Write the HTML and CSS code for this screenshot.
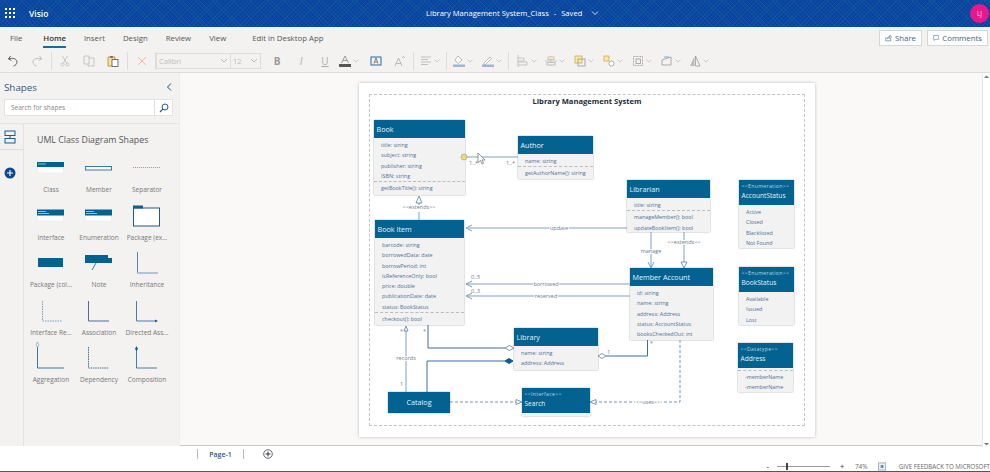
FILE: index.html
```html
<!DOCTYPE html>
<html lang="en">
<head>
<meta charset="utf-8">
<title>Visio</title>
<link rel="stylesheet" href="styles.css">
</head>
<body>
<div class="app">
  <header class="topbar">
    <svg class="waffle" width="12" height="12" viewBox="0 0 12 12"><g fill="#fff"><rect x="1" y="1" width="2" height="2"/><rect x="5" y="1" width="2" height="2"/><rect x="9" y="1" width="2" height="2"/><rect x="1" y="5" width="2" height="2"/><rect x="5" y="5" width="2" height="2"/><rect x="9" y="5" width="2" height="2"/><rect x="1" y="9" width="2" height="2"/><rect x="5" y="9" width="2" height="2"/><rect x="9" y="9" width="2" height="2"/></g></svg>
    <span class="brand">Visio</span>
    <div class="doc-title"><span>Library Management System_Class</span><span class="dash">-</span><span>Saved</span>
      <svg class="title-chev" width="8" height="6" viewBox="0 0 8 6"><path d="M1 1.500 4 4.500 7 1.500" fill="none" stroke="#fff" stroke-width=".8"/></svg>
    </div>
    <div class="avatar">LJ</div>
  </header>

  <nav class="tabs">
    <span class="tab tab-file">File</span>
    <span class="tab tab-active">Home</span>
    <span class="tab">Insert</span>
    <span class="tab">Design</span>
    <span class="tab">Review</span>
    <span class="tab tab-view">View</span>
    <span class="tab">Edit in Desktop App</span>
    <div class="tab-actions">
      <button class="action action-share">
        <svg width="10" height="10" viewBox="0 0 10 10"><path d="M1 4v5h7V6M3 6c.5-2 2-3 4-3V1l2.500 2.500L7 6V4.500C5.500 4.500 4 5 3 6Z" fill="none" stroke="#3d5f85" stroke-width=".8"/></svg>
        Share</button>
      <button class="action action-comments">
        <svg width="10" height="10" viewBox="0 0 10 10"><path d="M1 1h8v6H4L2 9V7H1Z" fill="none" stroke="#3d5f85" stroke-width=".8"/></svg>
        Comments</button>
    </div>
  </nav>

  <div class="toolbar">
    <span class="tool"><svg width="12" height="12" viewBox="0 0 12 12"><path d="M3.500 1 1.500 4 4.500 5.500M1.500 4C5 2.500 10 3.500 10 7c0 2-1.500 3.500-3.500 4" fill="none" stroke="#555" stroke-width=".9"/></svg></span>
    <span class="tool"><svg width="12" height="12" viewBox="0 0 12 12"><path d="M8.500 1 10.500 4 7.500 5.500M10.500 4C7 2.500 2 3.500 2 7c0 2 1.500 3.500 3.500 4" fill="none" stroke="#bbb" stroke-width=".9"/></svg></span>
    <span class="sep"></span>
    <span class="tool"><svg width="12" height="12" viewBox="0 0 12 12"><path d="M3.500 1 7.500 8M8.500 1 4.500 8" fill="none" stroke="#bbb" stroke-width=".8"/><circle cx="3.500" cy="9.500" r="1.500" fill="none" stroke="#bbb" stroke-width=".8"/><circle cx="8.500" cy="9.500" r="1.500" fill="none" stroke="#bbb" stroke-width=".8"/></svg></span>
    <span class="tool"><svg width="12" height="12" viewBox="0 0 12 12"><path d="M1 1h5v8H1ZM6 3h5v8H5V9" fill="none" stroke="#bbb" stroke-width=".8"/></svg></span>
    <span class="tool"><svg width="12" height="12" viewBox="0 0 12 12"><path d="M1 2h7v9H1Z" fill="#f7e0b5" stroke="#c98a2b" stroke-width=".9"/><rect x="5" y="4.500" width="6" height="7" fill="#fff" stroke="#555" stroke-width=".8"/><rect x="3" y="1" width="3" height="2" fill="#777"/></svg></span>
    <span class="sep sep-wide"></span>
    <span class="tool"><svg width="10" height="10" viewBox="0 0 10 10"><path d="M1 1 9 9M9 1 1 9" stroke="#f0b9a5"/></svg></span>
    <span class="sep sep-tight"></span>
    <div class="select select-font"><span>Calibri</span><svg width="8" height="5" viewBox="0 0 8 5"><path d="M1 1 4 4 7 1" fill="none" stroke="#aaa" stroke-width=".8"/></svg></div>
    <div class="select select-size"><span>12</span><svg width="8" height="5" viewBox="0 0 8 5"><path d="M1 1 4 4 7 1" fill="none" stroke="#aaa" stroke-width=".8"/></svg></div>
    <span class="tool tool-b">B</span>
    <span class="tool tool-i">I</span>
    <span class="tool tool-u">U</span>
    <span class="tool tool-chev"><svg width="12" height="12" viewBox="0 0 12 12"><path d="M2.500 8 6 1l3.500 7M3.800 5.500h4.400" fill="none" stroke="#888" stroke-width=".8"/><rect y="9" width="12" height="3" fill="#555"/></svg><svg class="chev" width="6" height="4" viewBox="0 0 6 4"><path d="M.5.5 3 3 5.500.5" fill="none" stroke="#bbb" stroke-width=".7"/></svg></span>
    <span class="tool"><svg width="12" height="10" viewBox="0 0 12 10"><rect x="1" y="1" width="10" height="8" fill="none" stroke="#2a6a9a"/><path d="M4 7.500 6 2l2 5.500M4.700 6h2.600" fill="none" stroke="#555" stroke-width=".7"/></svg></span>
    <span class="tool"><svg width="12" height="12" viewBox="0 0 12 12"><path d="M1 11 4.500 3 8 11M2.200 8.500h4.600M8 3l1.500-1.500L11 3" fill="none" stroke="#aaa" stroke-width=".8"/></svg></span>
    <span class="sep"></span>
    <span class="tool tool-chev"><svg width="12" height="10" viewBox="0 0 12 10"><path d="M1 1h10M1 3.500h7M1 6h10M1 8.500h7" stroke="#aaa" stroke-width=".7"/></svg><svg class="chev" width="6" height="4" viewBox="0 0 6 4"><path d="M.5.5 3 3 5.500.5" fill="none" stroke="#bbb" stroke-width=".7"/></svg></span>
    <span class="sep"></span>
    <span class="tool tool-chev"><svg width="12" height="12" viewBox="0 0 12 12"><path d="M5 1 9 5 5 8.500 2 5Z" fill="#fff" stroke="#aaa" stroke-width=".8"/><rect y="9.500" width="12" height="2.500" fill="#9db7d5"/></svg><svg class="chev" width="6" height="4" viewBox="0 0 6 4"><path d="M.5.5 3 3 5.500.5" fill="none" stroke="#bbb" stroke-width=".7"/></svg></span>
    <span class="tool tool-chev"><svg width="12" height="12" viewBox="0 0 12 12"><path d="M2 8 8 2l1.500 1.500-6 6H2Z" fill="#fff" stroke="#aaa" stroke-width=".8"/><rect y="9.500" width="12" height="2.500" fill="#9db7d5"/></svg><svg class="chev" width="6" height="4" viewBox="0 0 6 4"><path d="M.5.5 3 3 5.500.5" fill="none" stroke="#bbb" stroke-width=".7"/></svg></span>
    <span class="sep sep-after"></span>
    <span class="tool tool-chev"><svg width="12" height="12" viewBox="0 0 12 12"><path d="M1 0v12M1 3h6v3H1M1 7h9v3H1" fill="none" stroke="#bbb" stroke-width=".8"/></svg><svg class="chev" width="6" height="4" viewBox="0 0 6 4"><path d="M.5.5 3 3 5.500.5" fill="none" stroke="#bbb" stroke-width=".7"/></svg></span>
    <span class="tool tool-chev"><svg width="12" height="12" viewBox="0 0 12 12"><path d="M0 6h12M6 1v10" stroke="#bbb" stroke-width=".7"/><rect x="3" y="2" width="6" height="2.500" fill="#f3f2f1" stroke="#c4b27a" stroke-width=".7"/><rect x="2" y="7.500" width="8" height="2.500" fill="#f3f2f1" stroke="#aaa" stroke-width=".7"/></svg><svg class="chev" width="6" height="4" viewBox="0 0 6 4"><path d="M.5.5 3 3 5.500.5" fill="none" stroke="#bbb" stroke-width=".7"/></svg></span>
    <span class="tool tool-chev"><svg width="12" height="12" viewBox="0 0 12 12"><rect x="1" y="1" width="7" height="7" fill="#fbe8a6" stroke="#c9ad58" stroke-width=".8"/><rect x="4" y="4" width="7" height="7" fill="none" stroke="#999" stroke-width=".8"/></svg><svg class="chev" width="6" height="4" viewBox="0 0 6 4"><path d="M.5.5 3 3 5.500.5" fill="none" stroke="#bbb" stroke-width=".7"/></svg></span>
    <span class="tool tool-chev"><svg width="12" height="12" viewBox="0 0 12 12"><rect x="1" y="1" width="5" height="5" fill="#fbe8a6" stroke="#c9ad58" stroke-width=".8"/><circle cx="8.500" cy="8.500" r="2.500" fill="#fff" stroke="#999" stroke-width=".8"/></svg><svg class="chev" width="6" height="4" viewBox="0 0 6 4"><path d="M.5.5 3 3 5.500.5" fill="none" stroke="#bbb" stroke-width=".7"/></svg></span>
    <span class="tool tool-chev"><svg width="12" height="12" viewBox="0 0 12 12"><rect x="1.500" y="1.500" width="9" height="9" fill="none" stroke="#999" stroke-width=".8" stroke-dasharray="2 1"/><rect x="4" y="4" width="4.500" height="4.500" fill="none" stroke="#999" stroke-width=".8"/></svg><svg class="chev" width="6" height="4" viewBox="0 0 6 4"><path d="M.5.500 3 3 5.500.5" fill="none" stroke="#bbb" stroke-width=".7"/></svg></span>
    <span class="tool tool-chev"><svg width="12" height="12" viewBox="0 0 12 12"><path d="M1 10V5l9-3v8Z" fill="none" stroke="#999" stroke-width=".8"/><path d="M3 2h5" stroke="#5b8fc9" stroke-width=".8"/></svg><svg class="chev" width="6" height="4" viewBox="0 0 6 4"><path d="M.5.5 3 3 5.500.5" fill="none" stroke="#bbb" stroke-width=".7"/></svg></span>
    <span class="tool tool-chev"><svg width="12" height="12" viewBox="0 0 12 12"><path d="M5.500 1v10H1Z" fill="#bbb"/><path d="M6.500 1v10H11Z" fill="none" stroke="#999" stroke-width=".8"/></svg><svg class="chev" width="6" height="4" viewBox="0 0 6 4"><path d="M.5.5 3 3 5.500.5" fill="none" stroke="#bbb" stroke-width=".7"/></svg></span>
  </div>

  <main class="workspace">
    <aside class="sidebar">
      <div class="side-head">
        <span class="side-title">Shapes</span>
        <svg width="6" height="8" viewBox="0 0 6 8"><path d="M5 .5 1.500 4 5 7.500" fill="none" stroke="#1c4f7f"/></svg>
      </div>
      <div class="searchbox">
        <span class="search-ph">Search for shapes</span>
        <span class="search-btn"><svg width="10" height="10" viewBox="0 0 10 10"><circle cx="6" cy="4" r="3" fill="none" stroke="#1c5b92"/><path d="M3.800 6.200 1 9" stroke="#1c5b92" stroke-width="1.200"/></svg></span>
      </div>
      <div class="side-body">
        <div class="rail">
          <div class="rail-top"><svg width="12" height="14" viewBox="0 0 12 14"><rect x="1" y="1" width="10" height="4.500" fill="none" stroke="#1c5b92"/><rect x="1" y="8.500" width="10" height="4.500" fill="none" stroke="#1c5b92"/><path d="M6 5.500v3" stroke="#1c5b92"/></svg></div>
          <svg class="rail-add" width="12" height="12" viewBox="0 0 12 12"><circle cx="6" cy="6" r="5.500" fill="#0b4a8f"/><path d="M6 3v6M3 6h6" stroke="#fff" stroke-width="1.100"/></svg>
        </div>
        <div class="stencil">
          <h2 class="stencil-title">UML Class Diagram Shapes</h2>
          <div class="shape-grid">
            <div class="shape"><svg class="ico" viewBox="0 0 48 29"><rect class="w" x="10.500" y="12" width="26" height="6"/><rect class="f" x="10" y="7" width="27" height="5"/><path class="hi" d="M11 9h8"/></svg><span>Class</span></div>
            <div class="shape"><svg class="ico" viewBox="0 0 48 29"><rect x="10.500" y="11.500" width="26" height="3.500" fill="#fff" stroke="#3f78a8"/></svg><span>Member</span></div>
            <div class="shape"><svg class="ico" viewBox="0 0 48 29"><path d="M10 12.500h27" stroke="#8d9db0" stroke-dasharray="1 1"/></svg><span>Separator</span></div>
            <div class="shape"><svg class="ico" viewBox="0 0 48 29"><rect class="w" x="10.500" y="12" width="26" height="6"/><rect class="f" x="10" y="6.500" width="27" height="6"/><path class="hi" d="M11 8.500h8M11 10.500h11"/></svg><span>Interface</span></div>
            <div class="shape"><svg class="ico" viewBox="0 0 48 29"><rect class="w" x="10.500" y="12" width="26" height="6"/><rect class="f" x="10" y="6.500" width="27" height="6"/><path class="hi" d="M11 8.500h8M11 10.500h11"/></svg><span>Enumeration</span></div>
            <div class="shape"><svg class="ico" viewBox="0 0 48 29"><rect x="10.500" y="5" width="26" height="18" fill="#fff" stroke="#27577f"/><rect class="f" x="10" y="2.500" width="10" height="3"/></svg><span>Package (ex...</span></div>
            <div class="shape"><svg class="ico" viewBox="0 0 48 29"><rect class="f" x="11" y="8" width="25" height="9"/></svg><span>Package (col...</span></div>
            <div class="shape"><svg class="ico" viewBox="0 0 48 29"><path class="f" d="M10 5h23v3h4v5H10Z"/><path d="M21 13 17 20" stroke="#3f78a8"/></svg><span>Note</span></div>
            <div class="shape"><svg class="ico" viewBox="0 0 48 29"><path d="M14.500 2v21" stroke="#5b85ad"/><path d="M14 23h21" stroke="#9cb3d4" stroke-width="1.500"/></svg><span>Inheritance</span></div>
            <div class="shape"><svg class="ico" viewBox="0 0 48 29"><path d="M15.500 3v20H35" fill="none" stroke="#7f9cc0" stroke-dasharray="1.500 1"/></svg><span>Interface Re...</span></div>
            <div class="shape"><svg class="ico" viewBox="0 0 48 29"><path d="M13.500 3v20H34" fill="none" stroke="#4c6e96"/></svg><span>Association</span></div>
            <div class="shape"><svg class="ico" viewBox="0 0 48 29"><path d="M13.500 3v20H33" fill="none" stroke="#4c7aa6"/><path d="M32 21.500 35 23l-3 1.500Z" fill="#1c5b92"/></svg><span>Directed Ass...</span></div>
            <div class="shape"><svg class="ico" viewBox="0 0 48 29"><path d="M10.500 2v21H37" fill="none" stroke="#3c77a6"/><path d="M10.500-3 12 0l-1.500 2L9 0Z" fill="#fff" stroke="#6f8aa5" stroke-width=".6"/></svg><span>Aggregation</span></div>
            <div class="shape"><svg class="ico" viewBox="0 0 48 29"><path d="M13.500 2v21H34" fill="none" stroke="#4c6e96" stroke-dasharray="1.500 .8"/></svg><span>Dependency</span></div>
            <div class="shape"><svg class="ico" viewBox="0 0 48 29"><path d="M13.500 4v19H34" fill="none" stroke="#4c7aa6"/><path d="M13.500 1 15 4l-1.500 2L12 4Z" fill="#0e5a93"/></svg><span>Composition</span></div>
          </div>
        </div>
      </div>
    </aside>

    <section class="canvas">
      <div class="page">
        <div class="page-frame"></div>
        <div class="page-title">Library Management System</div>

        <svg class="wires" width="456" height="354" viewBox="359 83 456 354">
          <g class="wire">
            <path d="M465 157H518"/>
            <path d="M419 203V207M419 212V220"/>
            <path d="M419 196 416 203H422Z" class="open"/>
            <path d="M468 228H627"/>
            <path d="M472 225 466 228 472 231"/>
            <path d="M466 284H630"/>
            <path d="M472 281 466 284 472 287"/>
            <path d="M466 296H630"/>
            <path d="M472 293 466 296 472 299"/>
            <path d="M651 232V268"/>
            <path d="M648 262 651 268 654 262"/>
            <path d="M684 232V262"/>
            <path d="M681 262 684 268 687 262Z" class="open"/>
            <path d="M428 325V348H505" class="dark"/>
            <path d="M505 348 509.500 345.500 514 348 509.500 350.500Z" class="open"/>
            <path d="M406 392V331"/>
            <path d="M406 326 408 331H404Z" class="open"/>
            <path d="M427 392V361H506" class="dark"/>
            <path d="M505 361 509 358.500 513 361 509 363.500Z" class="solid"/>
            <path d="M450 402H517" class="dash"/>
            <path d="M522 402 516 399.500V404.500Z" class="open"/>
            <path d="M680 340V402H596" class="dash"/>
            <path d="M590 402 596 399.500V404.500Z" class="open"/>
            <path d="M606 356H647.500V340" class="dark"/>
            <path d="M598 356 602 353.500 606 356 602 358.500Z" class="open"/>
          </g>
          <circle cx="464" cy="157" r="3" fill="#f6d96b" stroke="#9aa0a6" stroke-width=".6"/>
          <path d="M478 153V162.500L480.500 160.500 482 164 483.500 163.300 482 160H485Z" fill="#fff" stroke="#555" stroke-width=".6"/>
          <g class="wire-text">
            <text x="469" y="165">1..*</text>
            <text x="506" y="165">1..*</text>
            <text x="419" y="209" text-anchor="middle" class="halo">&lt;&lt;extends&gt;&gt;</text>
            <text x="559" y="230" text-anchor="middle" class="halo">update</text>
            <text x="471" y="279">0..5</text>
            <text x="471" y="293">0..3</text>
            <text x="546" y="286" text-anchor="middle" class="halo">borrowed</text>
            <text x="546" y="298" text-anchor="middle" class="halo">reserved</text>
            <text x="651" y="253" text-anchor="middle" class="halo">manage</text>
            <text x="684" y="244" text-anchor="middle" class="halo">&lt;&lt;extends&gt;&gt;</text>
            <text x="400" y="333">*</text>
            <text x="423" y="333">*</text>
            <text x="406" y="360" text-anchor="middle" class="halo">records</text>
            <text x="400" y="386">1</text>
            <text x="607" y="354">1</text>
            <text x="650" y="345">*</text>
            <text x="648" y="404" text-anchor="middle" class="halo">&lt;&lt;uses&gt;&gt;</text>
          </g>
        </svg>

        <div class="node n-book">
          <div class="node-head">Book</div>
          <div class="rows"><div>title: string</div><div>subject: string</div><div>publisher: string</div><div>ISBN: string</div></div>
          <div class="rows methods"><div>getBookTitle(): string</div></div>
        </div>
        <div class="node n-author">
          <div class="node-head">Author</div>
          <div class="rows"><div>name: string</div></div>
          <div class="rows methods"><div>getAuthorName(): string</div></div>
        </div>
        <div class="node n-item">
          <div class="node-head">Book Item</div>
          <div class="rows"><div>barcode: string</div><div>borrowedData: date</div><div>borrowPeriod: int</div><div>isReferenceOnly: bool</div><div>price: double</div><div>publicationDate: date</div><div>status: BookStatus</div></div>
          <div class="rows methods"><div>checkout(): bool</div></div>
        </div>
        <div class="node n-librarian">
          <div class="node-head">Librarian</div>
          <div class="rows"><div>title: string</div></div>
          <div class="rows methods"><div>manageMember(): bool</div><div>updateBookItem(): bool</div></div>
        </div>
        <div class="node n-member">
          <div class="node-head">Member Account</div>
          <div class="rows"><div>id: string</div><div>name: string</div><div>address: Address</div><div>status: AccountStatus</div><div>booksCheckedOut: int</div></div>
        </div>
        <div class="node n-library">
          <div class="node-head">Library</div>
          <div class="rows"><div>name: string</div><div>address: Address</div></div>
        </div>
        <div class="node n-catalog"><div class="node-head node-fill">Catalog</div></div>
        <div class="node n-search">
          <div class="node-head node-stereo"><small>&lt;&lt;Interface&gt;&gt;</small>Search</div>
        </div>
        <div class="node n-acct">
          <div class="node-head node-stereo"><small>&lt;&lt;Enumeration&gt;&gt;</small>AccountStatus</div>
          <div class="rows"><div>Active</div><div>Closed</div><div>Blacklisted</div><div>Not Found</div></div>
        </div>
        <div class="node n-bstat">
          <div class="node-head node-stereo"><small>&lt;&lt;Enumeration&gt;&gt;</small>BookStatus</div>
          <div class="rows"><div>Available</div><div>Issued</div><div>Lost</div></div>
        </div>
        <div class="node n-addr">
          <div class="node-head node-stereo"><small>&lt;&lt;Datatype&gt;&gt;</small>Address</div>
          <div class="rows methods"><div>-memberName</div><div>-memberName</div></div>
        </div>
      </div>
      <div class="scrollbar">
        <svg width="7" height="6" viewBox="0 0 7 6"><path d="M1 4 3.500 1.500 6 4Z" fill="#777"/></svg>
        <svg width="7" height="6" viewBox="0 0 7 6"><path d="M1 2 3.500 4.500 6 2Z" fill="#777"/></svg>
      </div>
    </section>
  </main>

  <div class="pagebar">
    <span class="pb-sep"></span>
    <span class="pb-tab">Page-1</span>
    <span class="pb-sep"></span>
    <svg class="pb-add" width="10" height="10" viewBox="0 0 10 10"><circle cx="5" cy="5" r="4.300" fill="none" stroke="#667"/><path d="M5 2.500v5M2.500 5h5" stroke="#334"/></svg>
  </div>
  <footer class="statusbar">
    <span class="zoom-btn">-</span>
    <span class="slider"><i class="thumb"></i></span>
    <span class="zoom-btn">+</span>
    <span class="zoom-val">74%</span>
    <svg class="fit" width="9" height="9" viewBox="0 0 9 9"><rect x=".5" y=".5" width="8" height="8" fill="#e8eef6" stroke="#aab"/><rect x="3" y="3" width="3" height="3" fill="#5b85ad"/></svg>
    <span class="feedback">GIVE FEEDBACK TO MICROSOFT</span>
  </footer>
</div>
</body>
</html>
```

FILE: styles.css
```css
* { box-sizing: border-box; }
html, body { margin: 0; padding: 0; }
body { width: 990px; height: 472px; overflow: hidden; background: #f3f2f1; font-family: "Open Sans", "Noto Sans", sans-serif; color: #444; }
.app { display: flex; flex-direction: column; width: 990px; height: 472px; }

/* top bar */
.topbar { flex: 0 0 27px; display: flex; align-items: center; position: relative; padding: 0 0 1px 4px; color: #fff;
  background-color: #0c3fa2; background-image: repeating-linear-gradient(45deg, rgba(20,120,150,.28) 0 1px, transparent 1px 3px), repeating-linear-gradient(-45deg, rgba(20,120,150,.28) 0 1px, transparent 1px 3px); }
.waffle { flex: none; }
.brand { margin-left: 13px; font-size: 8.500px; font-weight: 600; }
.doc-title { position: absolute; left: 426px; top: 0; height: 26px; display: flex; align-items: center; gap: 4px; font-size: 7.600px; white-space: nowrap; }
.dash { margin: 0 1px; }
.title-chev { margin-left: 5px; }
.avatar { position: absolute; left: 970px; top: 4px; width: 19px; height: 19px; border-radius: 50%; background: #e8178f; display: flex; align-items: center; justify-content: center; font-size: 6.500px; color: #fde; }

/* tabs */
.tabs { flex: 0 0 24px; display: flex; align-items: center; font-size: 7.800px; color: #555; padding: 0 0 2px 10px; position: relative; }
.tab { margin-right: 18px; white-space: nowrap; }
.tab-file { margin-right: 21px; }
.tab-view { margin-right: 26px; }
.tab-active { color: #333; font-weight: 600; position: relative; }
.tab-active::after { content: ""; position: absolute; left: 0; right: 0; top: 13px; height: 2px; background: #1b6a9c; }
.tab-actions { margin-left: auto; display: flex; gap: 5px; padding-right: 2px; }
.action { height: 16px; display: flex; align-items: center; gap: 3px; background: #fff; border: 1px solid #d6d6d6; padding: 0 5px; font: 7.800px "Open Sans", sans-serif; color: #3d5f85; }
.action-share { width: 43px; }
.action-comments { width: 61px; }

/* toolbar */
.toolbar { flex: 0 0 22px; display: flex; align-items: center; padding: 0 0 2px 1px; border-bottom: 1px solid #dcdcdc; }
.tool { flex: none; width: 24px; height: 16px; display: flex; align-items: center; justify-content: center; gap: 2px; font-size: 9px; color: #aaa; }
.tool-chev { width: 28.800px; }
.chev { flex: none; }
.tool-b { font-weight: 700; color: #999; font-size: 10px; margin-left: 4px; }
.tool-i { font-style: italic; font-size: 10px; }
.tool-u { text-decoration: underline; font-size: 10px; margin-right: -2px; }
.sep { flex: none; width: 1px; height: 18px; background: #dcdcdc; margin: 0 1.500px; }
.sep-wide { margin-right: 2px; }
.sep-tight { margin-right: 0; }
.sep-after { margin-right: 3.500px; }
.select { flex: none; height: 16px; display: flex; align-items: center; justify-content: space-between; border: 1px solid #ddd; padding: 0 2px; color: #bbb; font-size: 7.500px; }
.select-font { width: 75px; }
.select-size { width: 30px; border-left: 0; }

/* workspace */
.workspace { flex: 1 1 auto; display: flex; min-height: 0; }
.sidebar { flex: 0 0 180px; display: flex; flex-direction: column; background: #f3f2f1; border-right: 1px solid #ececec; }
.side-head { height: 26px; display: flex; align-items: center; justify-content: space-between; padding: 2px 7px 0 4px; }
.side-title { font-size: 9.800px; color: #2c5a86; }
.searchbox { margin: 0 6px 0 4px; height: 17px; background: #fff; border: 1px solid #e3e3e3; display: flex; align-items: center; justify-content: space-between; }
.search-ph { font-size: 6.500px; color: #888; padding-left: 6px; }
.search-btn { width: 18px; height: 100%; display: flex; align-items: center; justify-content: center; border-left: 1px solid #ddd; }
.side-body { flex: 1 1 auto; margin-top: 7px; display: flex; border-top: 1px solid #e6e6e6; min-height: 0; }
.rail { flex: 0 0 24px; border-right: 1px solid #e2e2e2; display: flex; flex-direction: column; align-items: flex-start; }
.rail-top { width: 23px; height: 26px; display: flex; align-items: center; justify-content: center; border-bottom: 1px solid #ddd; padding-right: 3px; }
.rail-add { margin: 17px 0 0 4px; }
.stencil { flex: 1 1 auto; padding-left: 3px; }
.stencil-title { margin: 0; height: 31px; padding: 10px 0 0 10px; font-size: 8.800px; font-weight: 400; line-height: 12px; color: #555; white-space: nowrap; }
.shape-grid { display: grid; grid-template-columns: repeat(3, 48px); grid-auto-rows: 47.500px; }
.shape { display: flex; flex-direction: column; align-items: center; font-size: 6.500px; color: #777; }
.shape span { height: 10px; line-height: 10px; margin-top: 1px; white-space: nowrap; }
.ico { width: 48px; height: 29px; flex: none; overflow: visible; }
.ico .f { fill: #03628f; }
.ico .w { fill: #fff; stroke: #eee; }
.ico .hi { stroke: #bcd3e2; stroke-width: .8; fill: none; }

/* canvas */
.canvas { flex: 1 1 auto; display: flex; justify-content: space-between; background: #faf9f8; padding: 10px 0 0 179px; border-bottom: 1px solid #c8c8c8; min-width: 0; position: relative; }
.page { flex: none; position: relative; width: 456px; height: 354px; background: #fff; box-shadow: 0 0 3px #bbb; }
.page-frame { position: absolute; left: 10px; top: 11px; width: 436px; height: 332px; border: 1px dashed #c4c4c4; }
.page-title { position: absolute; left: 0; right: 0; top: 12px; text-align: center; font-size: 7.600px; line-height: 12px; font-weight: 700; color: #222c3c; }
.scrollbar { flex: 0 0 7px; margin-top: -9px; height: 373px; background: #fff; border-left: 1px solid #e6e6e6; display: flex; flex-direction: column; justify-content: space-between; }

/* wires */
.wires { position: absolute; left: 0; top: 0; overflow: visible; z-index: 2; }
.wire path { fill: none; stroke: #7ea1c0; stroke-width: 1; }
.wire path.dark { stroke: #3d6f9c; }
.wire path.dash { stroke: #7a94b5; stroke-dasharray: 3 2; }
.wire path.open { fill: #fff; stroke: #5d7f9f; stroke-width: .8; }
.wire path.solid { fill: #0e5a93; stroke: #0e5a93; }
.wire-text text { font-size: 5.500px; fill: #6d7c8c; font-family: "Open Sans", sans-serif; }
.wire-text text.halo { paint-order: stroke; stroke: #fff; stroke-width: 2px; }

/* nodes */
.node { position: absolute; background: #f2f2f2; box-shadow: 0 0 1.500px #8f979e; z-index: 1; }
.node-head { height: 18px; background: #03628f; color: #e8f2f8; font-size: 7.200px; line-height: 18px; padding-left: 2.500px; white-space: nowrap; }
.node-fill { height: 100%; text-align: center; line-height: 21px; padding: 0; }
.node-stereo { height: 25px; line-height: 10px; padding-top: 2px; font-size: 6.600px; }
.node-stereo small { display: block; font-size: 5.200px; line-height: 9px; letter-spacing: .3px; color: #bcd6e6; }
.rows { padding: 2px 0 0 7px; font-size: 5.400px; color: #4f7196; line-height: 10.300px; white-space: nowrap; }
.rows.methods { border-top: 1px dashed #bbb; padding-top: 1px; }
.n-book { left: 15px; top: 37px; width: 91px; height: 75px; }
.n-author { left: 159px; top: 53px; width: 75px; height: 43px; }
.n-item { left: 16px; top: 137px; width: 89px; height: 105px; }
.n-librarian { left: 268px; top: 97px; width: 83px; height: 52px; }
.n-member { left: 271px; top: 185px; width: 83px; height: 72px; }
.n-library { left: 155px; top: 245px; width: 84px; height: 42px; }
.n-catalog { left: 29px; top: 309px; width: 62px; height: 21px; }
.n-search { left: 163px; top: 305px; width: 68px; height: 28px; }
.n-acct { left: 380px; top: 97px; width: 55px; height: 68px; }
.n-bstat { left: 380px; top: 184px; width: 55px; height: 58px; }
.n-addr { left: 379px; top: 260px; width: 55px; height: 49px; }
.n-addr .rows.methods { margin-top: 2px; }

/* bottom */
.pagebar { flex: 0 0 16px; display: flex; align-items: center; padding-left: 197px; background: #fff; }
.pb-sep { width: 1px; height: 10px; background: #bbb; }
.pb-tab { width: 45px; text-align: center; font-size: 7px; font-weight: 600; color: #2c5a86; }
.pb-add { margin-left: 19px; }
.statusbar { flex: 0 0 10px; display: flex; align-items: center; padding-left: 765px; background: #fff; border-bottom: 1px solid #555; font-size: 6.500px; color: #666; white-space: nowrap; }
.zoom-btn { width: 6px; text-align: center; font-weight: 700; }
.slider { width: 58px; height: 1px; background: #999; margin: 0 10px 0 7px; position: relative; }
.thumb { position: absolute; left: 9px; top: -3px; width: 2px; height: 7px; background: #444; }
.zoom-val { margin-left: 10px; }
.fit { margin-left: 10px; }
.feedback { margin-left: 13px; font-size: 6.200px; }
```
